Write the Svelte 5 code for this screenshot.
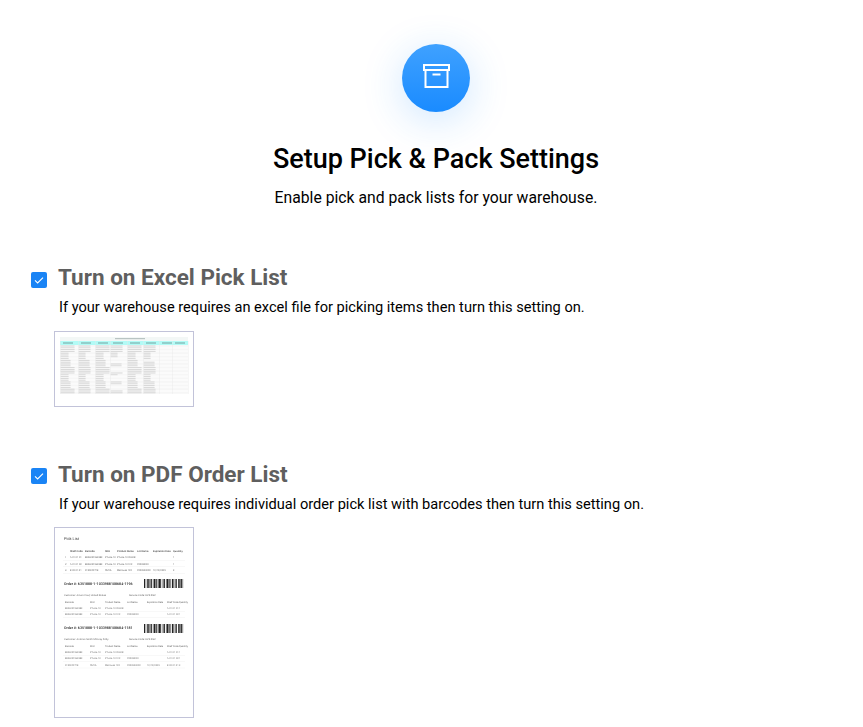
<script>
  const xlCols = [5, 23, 40, 55, 72, 88, 104, 117, 133];
  const xlRows = Array.from({ length: 27 }, (_, i) => 13.5 + i * 1.8);
  const widths = [14, 11, 8, 12, 10, 7];
  const colW = (c, r) => widths[(c * 3 + r * 5 + (r % 4)) % 6];
  const xlSkip = (c, r) => (c === 3 && r % 5 > 1 && r > 4) || (c === 5 && r === 8);

  const lineCols = [15, 30, 50, 62, 82, 98, 118];
  const pickHead = ['Shelf Code', 'Barcode', 'SKU', 'Product Name', 'Lot Name', 'Expiration Date', 'Quantity'];
  const pickRows = [
    ['A-01-01-01', '8806094963383', 'iPhone 13', 'iPhone 13 256GB', '', '', '1'],
    ['A-01-01-02', '8806094963383', 'iPhone 13', 'iPhone 13 512', 'X2203090I', '', '1'],
    ['B-02-01-01', '0195949718', 'RM-2L', 'Matrouss 10X', 'X220503092', '12/12/2025', '3']
  ];
  const orderHead = ['Barcode', 'SKU', 'Product Name', 'Lot Name', 'Expiration Date', 'Shelf Code', 'Quantity'];
  const orderCols = [10, 35, 50, 72, 92, 112, 124];
  const orderA = [
    ['8806094963383', 'iPhone 13', 'iPhone 13 256GB', '', '', 'A-01-01-01', '1'],
    ['8806094963383', 'iPhone 13', 'iPhone 13 512', 'X2203090I', '', 'A-01-01-02', '1']
  ];
  const orderB = [...orderA, ['0195949718', 'RM-2L', 'Matrouss 10X', 'X220503092', '12/12/2025', 'B-02-01-01', '3']];
  const barWidths = [1, 0.5, 1.5, 0.5, 0.5, 1, 1.5, 0.5, 1, 0.5, 2, 0.5, 0.5, 1, 0.5, 1.5];
  const bars = (() => {
    const out = [];
    let x = 0;
    let i = 0;
    while (x < 39) {
      const w = barWidths[i % barWidths.length];
      out.push({ x, w });
      x += w + barWidths[(i + 5) % barWidths.length] * 0.7;
      i++;
    }
    return out;
  })();
</script>

<main class="page">
  <header class="intro">
    <div class="badge">
      <svg width="27" height="24" viewBox="0 0 27 24" fill="none" stroke="#fff" stroke-width="2">
        <rect x="1" y="1" width="25" height="5" />
        <rect x="2.5" y="6" width="22" height="17" />
        <path d="M9.5 10.5h8" />
      </svg>
    </div>
    <h1>Setup Pick &amp; Pack Settings</h1>
    <p>Enable pick and pack lists for your warehouse.</p>
  </header>

  <section class="option first">
    <div class="head">
      <span class="check">
        <svg width="16" height="16" viewBox="0 0 16 16" fill="none" stroke="#fff" stroke-width="1.1"><path d="M4 8.4l2.6 2.5L12 5.6" /></svg>
      </span>
      <h2>Turn on Excel Pick List</h2>
    </div>
    <p class="desc">If your warehouse requires an excel file for picking items then turn this setting on.</p>
    <div class="thumb excel">
      <svg width="138" height="74" viewBox="0 0 138 74">
        <rect x="5" y="5" width="128" height="4" fill="#f3f7f6" />
        <rect x="5" y="9" width="128" height="4" fill="#b2fbf6" />
        {#each xlCols.slice(0, 8) as x, c}
          <rect x={x + 3} y="10.4" width="10" height="1.2" fill="#7fb3b0" />
        {/each}
        <rect x="60" y="6" width="30" height="1.2" fill="#b9c4c3" />
        {#each xlRows as y, r}
          <rect x="5" y={y - 0.4} width="128" height="1.8" fill={r % 2 ? '#fbfbfb' : '#f6f6f6'} />
          {#each xlCols.slice(0, 6) as x, c}
            {#if !xlSkip(c, r)}
              <rect x={x + 0.6} y={y} width={colW(c, r)} height="1" fill="#d6d6d6" />
            {/if}
          {/each}
        {/each}
        {#each xlCols as x}
          <rect x={x} y="9" width="0.4" height="53" fill="#e9e9e9" />
        {/each}
      </svg>
    </div>
  </section>

  <section class="option second">
    <div class="head">
      <span class="check">
        <svg width="16" height="16" viewBox="0 0 16 16" fill="none" stroke="#fff" stroke-width="1.1"><path d="M4 8.4l2.6 2.5L12 5.6" /></svg>
      </span>
      <h2>Turn on PDF Order List</h2>
    </div>
    <p class="desc">If your warehouse requires individual order pick list with barcodes then turn this setting on.</p>
    <div class="thumb pdf">
      <svg width="138" height="189" viewBox="0 0 138 189" font-family="Roboto, sans-serif" text-rendering="geometricPrecision">
        <text x="9" y="11.5" font-size="4" fill="#444">Pick List</text>
        {#each pickHead as t, i}
          <text x={lineCols[i]} y="23.5" font-size="2.6" fill="#444" font-weight="500">{t}</text>
        {/each}
        {#each pickRows as row, r}
          <text x="10" y={30 + r * 6.6} font-size="2.6" fill="#666">{r + 1}</text>
          {#each row as t, i}
            <text x={lineCols[i]} y={30 + r * 6.6} font-size="2.4" fill="#666">{t}</text>
          {/each}
          <rect x="8" y={32 + r * 6.6} width="122" height="0.4" fill="#eee" />
        {/each}

        <text x="9" y="56.5" font-size="3.6" fill="#222" font-weight="500">Order #: 6351888-1-1033988108684-1196</text>
        <g transform="translate(89 51)">
          {#each bars as b}
            <rect x={b.x} y="0" width={b.w} height="9" fill="#222" />
          {/each}
        </g>
        <text x="9" y="68" font-size="2.6" fill="#666">Customer: Arturo Paul, United States</text>
        <text x="74" y="68" font-size="2.6" fill="#666">Service Code: UPS XGP</text>
        {#each orderHead as t, i}
          <text x={orderCols[i]} y="75" font-size="2.4" fill="#666">{t}</text>
        {/each}
        {#each orderA as row, r}
          {#each row as t, i}
            <text x={orderCols[i]} y={81 + r * 6.4} font-size="2.4" fill="#777">{t}</text>
          {/each}
          <rect x="8" y={83 + r * 6.4} width="122" height="0.4" fill="#eee" />
        {/each}

        <text x="9" y="100.5" font-size="3.6" fill="#222" font-weight="500">Order #: 6351888-1-1033988108684-1181</text>
        <g transform="translate(89 96)">
          {#each bars as b}
            <rect x={b.x} y="0" width={b.w} height="9" fill="#222" />
          {/each}
        </g>
        <text x="9" y="112" font-size="2.6" fill="#666">Customer: Antonio Smith McFrey Kirby</text>
        <text x="74" y="112" font-size="2.6" fill="#666">Service Code: UPS XGP</text>
        {#each orderHead as t, i}
          <text x={orderCols[i]} y="119" font-size="2.4" fill="#666">{t}</text>
        {/each}
        {#each orderB as row, r}
          {#each row as t, i}
            <text x={orderCols[i]} y={125 + r * 6.4} font-size="2.4" fill="#777">{t}</text>
          {/each}
          <rect x="8" y={127 + r * 6.4} width="122" height="0.4" fill="#eee" />
        {/each}
      </svg>
    </div>
  </section>
</main>

<style>
  :global(body) {
    margin: 0;
    background: #fff;
  }
  .page {
    box-sizing: border-box;
    width: 863px;
    height: 727px;
    overflow: hidden;
    padding: 44px 0 0 31px;
    font-family: Roboto, "Liberation Sans", sans-serif;
    color: #000;
  }
  .intro {
    width: 810px;
    display: flex;
    flex-direction: column;
    align-items: center;
  }
  .badge {
    width: 68px;
    height: 68px;
    border-radius: 50%;
    background: linear-gradient(180deg, #3fa1ff 0%, #1a8bff 100%);
    box-shadow: 0 8px 40px rgba(30, 140, 255, 0.22);
    display: flex;
    align-items: center;
    justify-content: center;
  }
  .badge svg {
    display: block;
    margin-bottom: 4px;
  }
  h1 {
    margin: 30px 0 0;
    font-size: 27px;
    line-height: 34px;
    font-weight: 500;
  }
  .intro p {
    margin: 10px 0 0;
    font-size: 15.72px;
    line-height: 24px;
  }
  .option.first {
    margin-top: 53px;
  }
  .option.second {
    margin-top: 53px;
  }
  .head {
    display: flex;
    align-items: center;
    gap: 11px;
    height: 28px;
  }
  .check {
    width: 16px;
    height: 16px;
    margin-top: 6px;
    border-radius: 2px;
    background: #1a84f5;
    display: block;
  }
  .second .check {
    margin-top: 4px;
  }
  .check svg {
    display: block;
  }
  h2 {
    margin: 0;
    font-size: 22.5px;
    line-height: 28px;
    font-weight: 700;
    color: #5f5f5f;
  }
  .desc {
    margin: 4px 0 0 28px;
    font-size: 14.62px;
    line-height: 24px;
  }
  .thumb {
    margin: 12px 0 0 23px;
    width: 138px;
    border: 1px solid #c2c3d9;
    background: #fff;
  }
  .second .thumb {
    margin-top: 11px;
  }
  .thumb svg {
    display: block;
    filter: blur(0.3px);
  }
  .excel {
    height: 74px;
  }
  .pdf {
    height: 189px;
  }
</style>
